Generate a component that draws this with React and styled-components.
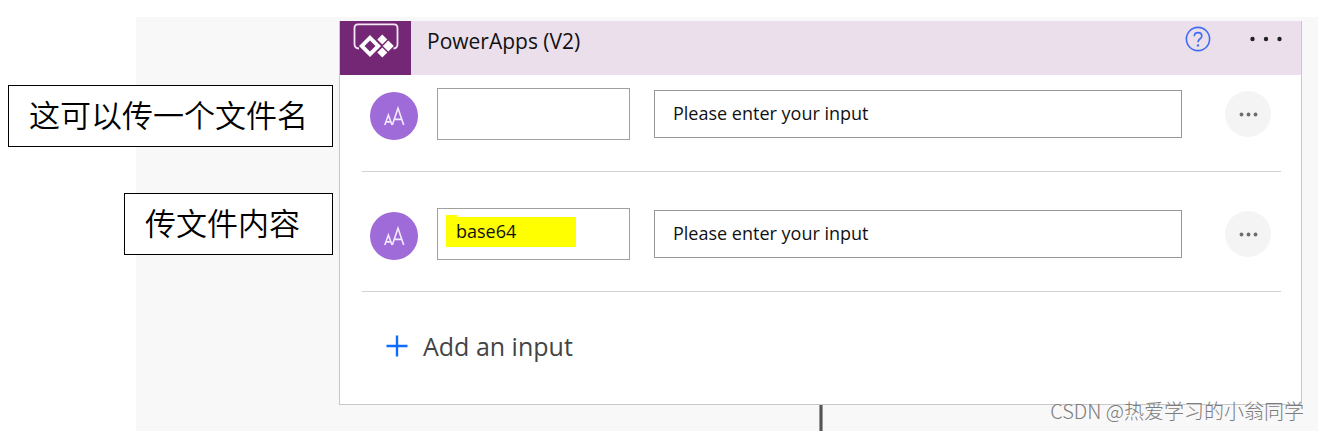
import React from 'react';
import styled, { createGlobalStyle } from 'styled-components';

const GlobalStyle = createGlobalStyle`
  *, *::before, *::after {
    box-sizing: border-box;
  }

  body {
    margin: 0;
    background: #fff;
    color: #111;
    font-family: "Open Sans", "Noto Sans CJK SC", sans-serif;
  }

  button, input {
    font: inherit;
    color: inherit;
    border: 0;
    padding: 0;
    background: none;
    outline: none;
  }

  button {
    cursor: pointer;
  }
`;

const Page = styled.div`
  position: relative;
  padding-top: 17px;
`;

const Canvas = styled.main`
  display: grid;
  grid-template-columns: 339px minmax(0, 1fr) 16px;
  padding-top: 4px;
  background: linear-gradient(to right, #fff 136px, #f8f8f8 136px);
`;

const Notes = styled.aside`
  display: flex;
  flex-direction: column;
  align-items: flex-end;
  gap: 46px;
  padding: 64px 6px 0 0;
`;

const Note = styled.p`
  width: ${({ $width }) => $width}px;
  margin: 0;
  padding: 5px 20px 9px;
  border: 1px solid #000;
  background: #fff;
  color: #000;
  font-family: "Noto Sans CJK SC", sans-serif;
  font-size: 31px;
  font-weight: 350;
  line-height: 46px;
  white-space: nowrap;
`;

const Card = styled.section`
  border: solid #c8c8c8;
  border-width: 0 1px 1px;
  background: #fff;
`;

const Header = styled.header`
  display: flex;
  height: 54px;
  padding-right: 18px;
  background: #ebdfeb;
`;

const Logo = styled.div`
  width: 71px;
  background: #742774;

  svg {
    display: block;
  }
`;

const Title = styled.h1`
  flex: 1;
  margin: 0;
  padding-left: 16px;
  font-size: 21px;
  font-weight: 400;
  line-height: 40px;
`;

const HeaderButton = styled.button`
  display: flex;
  align-items: center;
  justify-content: center;
  width: 34px;
  height: 36px;
  margin-left: ${({ $gap }) => $gap || 0}px;
`;

const Body = styled.div`
  padding: 0 20px 4px 22px;
`;

const Row = styled.div`
  display: flex;
  align-items: center;
  padding: ${({ $first }) => ($first ? 13 : 36)}px 10px 31px 8px;
  border-bottom: 1px solid #d2d2d2;
`;

const TypeIcon = styled.span`
  flex: none;
  align-self: flex-end;
  width: 48px;
  height: 48px;
  margin-right: 19px;
  border-radius: 50%;
  background: #9f6bd9;
`;

const NameBox = styled.div`
  flex: 0 1 193px;
  height: 52px;
  margin-right: 24px;
  padding: 8px;
  border: 1px solid #a0a0a0;
`;

const Marked = styled.div`
  position: relative;
  width: 130px;
  background: ${({ $on }) => ($on ? '#ff0' : 'none')};

  &::before {
    content: "";
    position: absolute;
    top: -2px;
    left: 0;
    width: 11px;
    height: 2px;
    background: inherit;
  }
`;

const NameInput = styled.input`
  display: block;
  width: 100%;
  height: 30px;
  font-size: 18px;

  && {
    padding: 0 10px 2px;
  }
`;

const ValueInput = styled.input`
  flex: 1;
  min-width: 0;
  height: 48px;
  font-size: 18px;

  && {
    padding: 0 18px 2px;
    border: 1px solid #969696;
  }

  &::placeholder {
    color: #111;
    opacity: 1;
  }
`;

const MoreButton = styled.button`
  flex: none;
  width: 46px;
  height: 46px;
  margin-left: 43px;
  border-radius: 50%;

  && {
    background: #f4f4f4;
  }

  svg {
    display: block;
  }
`;

const AddButton = styled.button`
  display: flex;
  align-items: center;
  gap: 15px;
  height: 108px;
  font-size: 25px;

  && {
    padding-left: 24px;
    color: #444;
  }
`;

const Connector = styled.div`
  grid-column: 2;
  justify-self: center;
  width: 4px;
  height: 26px;
  border: solid #999;
  border-width: 0 1px;
  background: #555;
`;

const Watermark = styled.footer`
  position: absolute;
  right: 14px;
  bottom: 6px;
  color: #7c7c7c;
  font-family: "Noto Sans CJK SC", sans-serif;
  font-size: 20px;
  font-weight: 300;
  line-height: 28px;
`;

const PowerAppsLogo = () => (
  <svg width="71" height="54" viewBox="0 0 71 54" fill="none">
    <path
      d="M19 27.5 Q14.5 27.5 14.5 23 V7 Q14.5 3.4 18 3.4 H54 Q57.5 3.4 57.5 7 V23 Q57.5 27.5 53.5 27.5"
      stroke="#f3e8f3"
      strokeWidth="1.8"
    />
    <path
      fill="#fff"
      fillRule="evenodd"
      d="M30 14 L41 25 L30 36 L19 25 Z M30 19.5 L24.5 25 L30 30.5 L35.5 25 Z"
    />
    <path
      fill="#fff"
      d="M42.3 13.4 L47.3 18.4 L42.3 23.4 L37.3 18.4 Z M48.3 19.5 L53.8 25 L48.3 30.5 L42.8 25 Z M42.3 26.6 L47.3 31.6 L42.3 36.6 L37.3 31.6 Z"
    />
  </svg>
);

const TextTypeGlyph = () => (
  <svg width="48" height="48" viewBox="0 0 48 48" fill="none" stroke="#f3eafb" strokeWidth="1.6">
    <path d="M14.8 33 L18.4 23 L22 33 M16 29.9 H20.8" />
    <path d="M22.3 33 L28 16.2 L33.7 33 M24.2 27.4 H31.8" />
  </svg>
);

const HelpIcon = () => (
  <svg width="26" height="26" viewBox="0 0 26 26" fill="none" stroke="#3e6cf5" strokeWidth="1.6">
    <circle cx="13" cy="13" r="11.6" />
    <path d="M9.3 10.2 Q9.3 6.6 13 6.6 Q16.8 6.6 16.8 9.9 Q16.8 11.6 14.8 13 Q13 14.3 13 16.3" />
    <circle cx="13" cy="19.4" r="1.2" fill="#3e6cf5" stroke="none" />
  </svg>
);

const HeaderDots = () => (
  <svg width="34" height="6" viewBox="0 0 34 6" fill="#222">
    <circle cx="3.5" cy="3" r="2.2" />
    <circle cx="17" cy="3" r="2.2" />
    <circle cx="30.5" cy="3" r="2.2" />
  </svg>
);

const RowDots = () => (
  <svg width="46" height="46" viewBox="0 0 46 46" fill="#6e6e6e">
    <circle cx="16.5" cy="23.5" r="1.9" />
    <circle cx="23.5" cy="23.5" r="1.9" />
    <circle cx="30.5" cy="23.5" r="1.9" />
  </svg>
);

const PlusIcon = () => (
  <svg width="22" height="22" viewBox="0 0 22 22" stroke="#0f6cff" strokeWidth="2.4">
    <path d="M0.5 11 H21.5 M11 0.5 V21.5" />
  </svg>
);

const InputRow = ({ name, first }) => (
  <Row $first={first}>
    <TypeIcon>
      <TextTypeGlyph />
    </TypeIcon>
    <NameBox>
      <Marked $on={Boolean(name)}>
        <NameInput defaultValue={name} aria-label="Input name" />
      </Marked>
    </NameBox>
    <ValueInput placeholder="Please enter your input" aria-label="Input description" />
    <MoreButton aria-label="More options">
      <RowDots />
    </MoreButton>
  </Row>
);

const App = () => {
  return (
    <Page>
      <GlobalStyle />
      <Canvas>
        <Notes>
          <Note $width={325}>这可以传一个文件名</Note>
          <Note $width={209}>传文件内容</Note>
        </Notes>
        <Card>
          <Header>
            <Logo>
              <PowerAppsLogo />
            </Logo>
            <Title>PowerApps (V2)</Title>
            <HeaderButton aria-label="Help">
              <HelpIcon />
            </HeaderButton>
            <HeaderButton $gap={34} aria-label="Menu">
              <HeaderDots />
            </HeaderButton>
          </Header>
          <Body>
            <InputRow name="" first />
            <InputRow name="base64" />
            <AddButton>
              <PlusIcon />
              Add an input
            </AddButton>
          </Body>
        </Card>
        <Connector />
      </Canvas>
      <Watermark>CSDN @热爱学习的小翁同学</Watermark>
    </Page>
  );
};

export default App;
